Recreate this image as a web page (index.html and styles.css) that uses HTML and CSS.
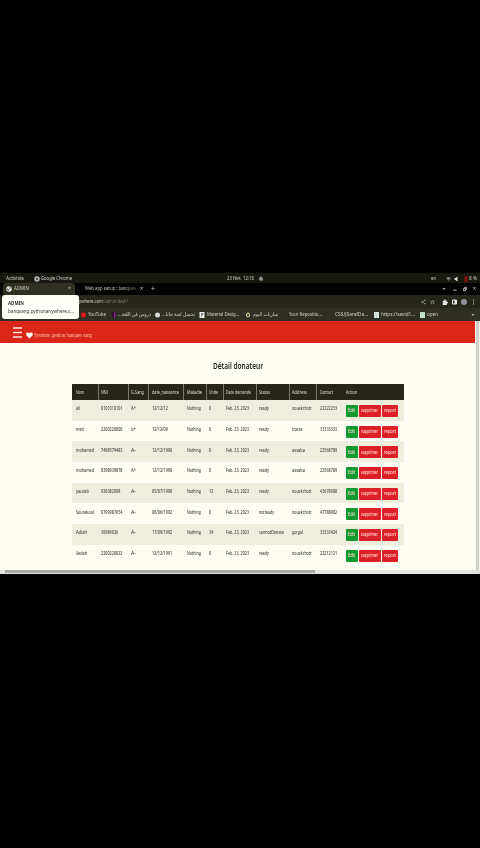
FILE: index.html
```
<!DOCTYPE html>
<html lang="fr">
<head>
<meta charset="utf-8">
<title>ADMIN</title>
<link rel="stylesheet" href="styles.css">
</head>
<body>
<div class="screen">
  <div class="bar system">
    <span class="t" style="--x:6px;--w:18px">Activités</span>
    <span class="t" style="--x:34px;--w:6px"><svg viewBox="0 0 10 10"><circle cx="5" cy="5" r="4.5" fill="#bbb"/><circle cx="5" cy="5" r="2" fill="#555"/></svg></span>
    <span class="t" style="--x:41px;--w:31px">Google Chrome</span>
    <span class="t" style="--x:227px;--w:27px">23 févr.&nbsp; 12:18</span>
    <span class="t" style="--x:259px;--w:4px"><svg viewBox="0 0 8 10"><path d="M1 4a3 3 0 0 1 6 0v3H1zM3 8h3M1 1l6 7" fill="#888" stroke="#aaa"/></svg></span>
    <span class="t" style="--x:431px;--w:5px">en</span>
    <span class="t" style="--x:446px;--w:5px"><svg viewBox="0 0 10 10"><path d="M0 3q5-4 10 0L5 9z" fill="#777"/></svg></span>
    <span class="t" style="--x:454px;--w:5px"><svg viewBox="0 0 10 10"><path d="M1 3h2l4-3v10L3 7H1z" fill="#ddd"/></svg></span>
    <span class="t" style="--x:464px;--w:4px"><svg viewBox="0 0 8 12"><path d="M1 0h6v12H1z" fill="#8a1414"/></svg></span>
    <span class="t" style="--x:469px;--w:8px">8 %</span>
  </div>
  <div class="bar tabs">
    <div class="tab"></div>
    <span class="t" style="--x:6px;--w:6px"><svg viewBox="0 0 12 12"><circle cx="6" cy="6" r="5.5" fill="#eee"/><path d="M1 5l4 1 1 4-3-2zM7 1l3 3-3 2z" fill="#333"/></svg></span>
    <span class="t" style="--x:14px;--w:15px">ADMIN</span>
    <span class="t" style="--x:68px;--w:3px">×</span>
    <span class="t fade" style="--x:85px;--w:51px">Web app setup : banques</span>
    <span class="t big" style="--x:140px;--w:3px">×</span>
    <span class="t big" style="--x:151px;--w:4px">+</span>
    <span class="t" style="--x:442px;--w:4px"><svg viewBox="0 0 10 10"><path d="M1 3h8L5 7z" fill="#ddd"/></svg></span>
    <span class="t" style="--x:453px;--w:4px"><svg viewBox="0 0 10 10"><path d="M1 8h8" stroke="#eee" stroke-width="2"/></svg></span>
    <span class="t" style="--x:463px;--w:4px"><svg viewBox="0 0 10 10"><path d="M1 4h5v5H1zM4 4V1h5v5H6" fill="none" stroke="#eee" stroke-width="1.8"/></svg></span>
    <span class="t big" style="--x:473px;--w:3px">×</span>
  </div>
  <div class="bar address">
    <span class="t" style="--x:79px;--w:24px">ywhere.com</span>
    <span class="t dim" style="--x:103px;--w:25px">/admin/dash/</span>
    <span class="t" style="--x:421px;--w:5px"><svg viewBox="0 0 10 10"><path d="M8 1.500L2 5l6 3.500" fill="none" stroke="#aaa" stroke-width="1.300"/><path d="M7 0.500h2v2H7zM1 4h2v2H1zM7 7.500h2v2H7z" fill="#bbb"/></svg></span>
    <span class="t" style="--x:430px;--w:5px"><svg viewBox="0 0 10 10"><path d="M5 1l1 3h3L7 6l1 3-3-2-3 2 1-3-2-2h3z" fill="none" stroke="#aaa"/></svg></span>
    <span class="t" style="--x:442px;--w:6px"><svg viewBox="0 0 10 10"><path d="M1 3h3V1h2v2h2v2h2v2H8v3H1V7h1V5H1z" fill="#eee"/></svg></span>
    <span class="t" style="--x:452px;--w:5px"><svg viewBox="0 0 10 10"><path d="M1 1h8v8H1z" fill="none" stroke="#eee" stroke-width="2"/><path d="M5 1h4v8H5z" fill="#eee"/></svg></span>
    <span class="t" style="--x:461px;--w:6px"><svg viewBox="0 0 10 10"><circle cx="5" cy="5" r="5" fill="#92929a"/></svg></span>
    <span class="t" style="--x:472px;--w:3px"><svg viewBox="0 0 6 12"><path d="M2 1h2v2H2zM2 5h2v2H2zM2 9h2v2H2z" fill="#ccc"/></svg></span>
  </div>
  <div class="bar marks">
    <span class="t" style="--x:81px;--w:5px"><svg viewBox="0 0 10 10"><rect width="10" height="10" rx="4" fill="#df1720"/></svg></span>
    <span class="t" style="--x:88px;--w:18px">YouTube</span>
    <span class="t" style="--x:112px;--w:4px"><svg viewBox="0 0 8 10"><path d="M0 0h8v10H0z" fill="#2c0c2c"/><path d="M4 0h3v10H4z" fill="#92278f"/></svg></span>
    <span class="t" style="--x:118px;--w:33px" dir="rtl">دروس في اللغة...</span>
    <span class="t" style="--x:155px;--w:5px"><svg viewBox="0 0 10 10"><circle cx="5" cy="5" r="5" fill="#ddd"/></svg></span>
    <span class="t" style="--x:162px;--w:33px" dir="rtl">تحميل لعبة جاتا...</span>
    <span class="t" style="--x:199px;--w:6px"><svg viewBox="0 0 10 12"><path d="M0 0h10v12H0z" fill="#eee"/><path d="M4 2v8M4 3h3v3H4" fill="none" stroke="#333"/></svg></span>
    <span class="t" style="--x:207px;--w:32px">Material Desig...</span>
    <span class="t" style="--x:246px;--w:4px"><svg viewBox="0 0 8 10"><ellipse cx="4" cy="5" rx="3" ry="4" fill="#333" stroke="#e8e8a0" stroke-width="2"/></svg></span>
    <span class="t" style="--x:253px;--w:25px" dir="rtl">مباريات اليوم</span>
    <span class="t" style="--x:289px;--w:33px">Your Repositio...</span>
    <span class="t" style="--x:335px;--w:33px">CSS/JSandDa...</span>
    <span class="t" style="--x:374px;--w:5px"><svg viewBox="0 0 10 12"><path d="M0 0h10v12H0z" fill="#d4e4dc"/></svg></span>
    <span class="t" style="--x:381px;--w:34px">https://savid1...</span>
    <span class="t" style="--x:420px;--w:5px"><svg viewBox="0 0 10 12"><path d="M0 0h10v12H0z" fill="#c4dccc"/></svg></span>
    <span class="t" style="--x:427px;--w:11px">open</span>
    <span class="t" style="--x:471px;--w:4px"><svg viewBox="0 0 10 10"><path d="M1 3h8L5 7z" fill="#ddd"/></svg></span>
  </div>
  <div class="view">
    <div class="page">
      <header class="brand">
        <svg class="burger" viewBox="0 0 18 24"><path d="M0 3h18M0 12h18M0 21h18" stroke="#ffe9df" stroke-width="3"/></svg>
        <svg class="heart" viewBox="0 0 14 14"><path d="M7 13L1 7C-2 1 5-1 7 3c2-4 9-2 6 4z" fill="#fff"/></svg>
        <span class="t" style="--x:34px;--w:58px">Système gestion banques sang</span>
      </header>
      <h1><span class="t" style="--x:213px;--w:50px">Détail donateur</span></h1>
      <div class="table" id="table"></div>
    </div>
    <div class="vscroll"></div>
  </div>
  <div class="hscroll"><div class="thumb"></div></div>
  <div class="tip">
    <b><span class="t" style="--x:6px;--w:16px">ADMIN</span></b>
    <div><span class="t" style="--x:6px;--w:66px">banqsang.pythonanywhere.c...</span></div>
  </div>
</div>
<script src="app.js"></script>
</body>
</html>
```
FILE: styles.css
```
* { box-sizing: border-box; }
body {
  margin: 0;
  height: 848px;
  background: #000;
  overflow: hidden;
  font: 5.4px "Noto Sans", "DejaVu Sans", sans-serif;
}
.screen {
  position: relative;
  display: flex;
  flex-direction: column;
  width: 480px;
  height: 301px;
  margin-top: 273px;
}
.bar, .row, .brand, h1, .tip > * { display: grid; align-items: center; }
.bar > *, .row > *, .brand > *, h1 > *, .tip > * > * { grid-area: 1 / 1; }
.t {
  justify-self: start;
  margin-left: var(--x);
  white-space: nowrap;
  line-height: 1.4;
  transform-origin: left center;
}
.t svg { display: block; width: var(--w); height: 6px; }
.bar { color: #d0d0c8; }
.system { height: 10px; padding-top: 1px; background: #191912; }
.tabs { height: 12px; background: #020202; }
.tab { width: 72px; height: 12px; margin-left: 3px; border-radius: 3px 3px 0 0; background: #2f2f22; }
.big { font-size: 7px; }
.fade {
  color: transparent;
  background: linear-gradient(90deg, #d0d0c8 75%, #55554c);
  -webkit-background-clip: text;
  background-clip: text;
}
.address { height: 13px; background: #26261b; }
.marks { height: 13px; background: #2f2f24; }
.dim { color: #77776f; }
.view { display: flex; height: 249px; background: #fdfdf4; }
.page { width: 475px; }
.vscroll { width: 5px; background: #d0d0cc; border-left: 1px solid #f4f4ec; border-right: 1px solid #f4f4ec; }
.brand { height: 22px; background: #d92617; color: #ffc0a8; font: 6.4px "Liberation Serif", serif; }
.brand .t { margin-top: 7px; }
.burger { width: 9px; height: 13px; margin-left: 13px; }
.heart { width: 7px; height: 7px; margin: 6px 0 0 26px; }
h1 { height: 41px; margin: 0; padding-top: 5px; color: #222; font-size: 8.4px; font-weight: 600; }
.table { width: 332px; margin-left: 72px; }
.row { height: 20.7px; color: #44443e; font-size: 5px; font-weight: 500; }
.row > .t { margin-top: -3px; }
.row.odd { background: #eeeedc; }
.row.head { height: 16px; background: #26261b; color: #d0d0c0; }
.row.head > .t { margin-top: 1px; }
.sep { width: 1px; height: 16px; margin-left: var(--x); background: #77776f; }
.actions { display: flex; gap: 1.5px; margin: 1px 0 0 273.5px; }
.btn { display: grid; align-items: center; height: 12px; width: var(--b); border-radius: 1px; color: #ffe0d4; background: #dc2028; }
.btn.edit { background: #129a30; }
.hscroll { height: 4px; background: #e4e4de; }
.thumb { width: 310px; height: 3px; margin-left: 5px; background: #a9a9ac; }
.tip { position: absolute; left: 2px; top: 22px; width: 77px; height: 24px; padding: 5px 0 0; border-radius: 3px; background: #fffffa; color: #333; }
.tip > * { height: 8px; }
```
FILE: app.js
```
const heads = ['Nom', 'NNI', 'G.Sang', 'date_naissance', 'Maladie', 'Unite', 'Date demande', 'Status', 'Address', 'Contact', 'Action'];
const xs = [3.5, 29, 59, 80, 115, 137, 154, 187, 220, 248, 273.5];
const headWidths = [8, 7, 13, 27, 15, 9, 25, 11, 15, 13, 11];
const rows = [
  ['ali', '0101010101', 'A+', '12/12/12', '0', 'ready', 'nouakchott', '22222233'],
  ['meti', '2200220000', 'o+', '12/12/09', '0', 'ready', 'trarza', '33333333'],
  ['mohamed', '7498579483', 'A-', '12/12/1990', '0', 'ready', 'assaba', '22568789'],
  ['mohamed', '8398939878', 'A+', '12/12/1990', '0', 'ready', 'assaba', '22568789'],
  ['yaurab', '929382098', 'A-', '05/07/1990', '12', 'ready', 'nouakchott', '43678908'],
  ['Sourakoul', '0799987654', 'A-', '06/06/1992', '0', 'notready', 'nouakchott', '47788902'],
  ['Adiah', '36984926', 'A-', '17/09/1992', '34', 'cannotDonate', 'gorgol', '33333424'],
  ['Sedah', '2200220022', 'A-', '12/12/1991', '0', 'ready', 'nouakchott', '22212121']
];
const cell = (s, x, w) => `<span class="t" style="--x:${x}px;--w:${w}px">${s}</span>`;
const action = (s, b, w, c) => `<span class="btn ${c}" style="--b:${b}px">${cell(s, (b - w) / 2, w)}</span>`;
const digits = s => s.length * 2.15;
const words = { ali: 4, meti: 8, mohamed: 18, yaurab: 13, Sourakoul: 18, Adiah: 11, Sedah: 11, ready: 10, notready: 15, cannotDonate: 25, nouakchott: 19.5, trarza: 10.5, assaba: 13, gorgol: 11 };
let html = '<div class="row head">' + heads.map((h, i) => cell(h, xs[i], headWidths[i])).join('')
  + [25.5, 55.5, 76, 111, 133.5, 150.5, 183.5, 216.5, 243.5].map(x => `<i class="sep" style="--x:${x}px"></i>`).join('') + '</div>';
rows.forEach((r, i) => {
  const v = [r[0], r[1], r[2], r[3], 'Nothing', r[4], 'Feb. 23, 2023', r[5], r[6], r[7]];
  const w = [words[r[0]], digits(r[1]), 5, digits(r[3]) - 1.3, 14, digits(r[4]), 23, words[r[5]], words[r[6]], digits(r[7])];
  html += `<div class="row ${i % 2 ? '' : 'odd'}">` + v.map((s, k) => cell(s, xs[k], w[k])).join('')
    + `<div class="actions">${action('Edit', 12, 7, 'edit')}${action('supprimer', 21.5, 17, '')}${action('report', 16, 12, '')}</div></div>`;
});
document.getElementById('table').innerHTML = html;
document.querySelectorAll('.t').forEach(e => {
  if (e.querySelector('svg')) return;
  const width = parseFloat(e.style.getPropertyValue('--w'));
  e.style.transform = `scaleX(${width / e.getBoundingClientRect().width})`;
});
```
